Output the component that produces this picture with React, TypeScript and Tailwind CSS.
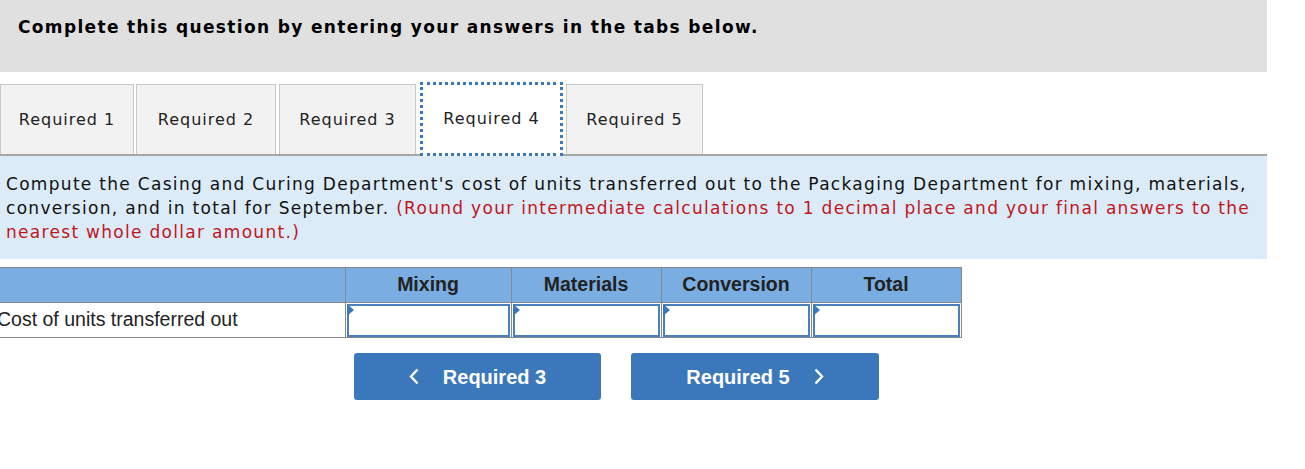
import React from 'react';

const verdana = { fontFamily: 'Verdana, "DejaVu Sans", sans-serif' };
const arial = { fontFamily: '"Liberation Sans", Arial, sans-serif' };

const tabs = ['Required 1', 'Required 2', 'Required 3', 'Required 4', 'Required 5'];
const tabW = ['w-[134px]', 'w-[140px] ml-[2px]', 'w-[137px] ml-[3px]', '', 'w-[137px] ml-[3px]'];
const cols = ['Mixing', 'Materials', 'Conversion', 'Total'];
const colW = ['w-[166px]', 'w-[150px]', 'w-[150px]', 'w-[150px]'];

const AnswerCell: React.FC<{ w: string }> = ({ w }) => (
  <td className={`${w} p-0 border border-[#888] h-[35px]`}>
    <div className="relative h-[33px] mx-px border-2 border-[#4a7fc0] bg-white">
      <span className="absolute -left-[2px] -top-[2px] w-0 h-0 border-t-[6px] border-b-[6px] border-l-[7px] border-t-transparent border-b-transparent border-l-[#3a77bb]" />
    </div>
  </td>
);

const App: React.FC = () => {
  return (
    <div className="w-[1305px] h-[469px] bg-white overflow-hidden">
      <div className="w-[1267px]">
        <div className="h-[72px] bg-[#e0e0e0] pl-[18px] pt-[15px]">
          <h1 className="text-[17px] font-bold text-black tracking-[1.35px]" style={verdana}>
            Complete this question by entering your answers in the tabs below.
          </h1>
        </div>

        <div className="mt-[12px] flex items-end border-b-2 border-[#a6a6a6] h-[72px]" style={verdana}>
          {tabs.map((t, i) =>
            i === 3 ? (
              <div
                key={t}
                className="h-[74px] -mb-[2px] ml-[4px] w-[143px] flex items-center justify-center bg-white border-[3px] border-dotted border-[#3a77bb] text-[16px] tracking-[1px] text-[#222]"
              >
                {t}
              </div>
            ) : (
              <div
                key={t}
                className={`h-[70px] ${tabW[i]} flex items-center justify-center bg-[#f2f2f2] border border-[#c8c8c8] border-b-0 text-[16px] tracking-[1px] text-[#222]`}
              >
                {t}
              </div>
            )
          )}
        </div>

        <div className="h-[103px] bg-[#dbebf8] pl-[6px] pt-[16px] pr-[10px] text-[17px] leading-[24px] tracking-[1.3px] text-[#111]" style={verdana}>
          Compute the Casing and Curing Department's cost of units transferred out to the Packaging Department for mixing, materials, conversion, and in total for September.{' '}
          <span className="text-[#c0161c]">
            (Round your intermediate calculations to 1 decimal place and your final answers to the nearest whole dollar amount.)
          </span>
        </div>
      </div>

      <table className="mt-[8px] -ml-[3px] border-collapse text-[19.5px]" style={arial}>
        <thead>
          <tr className="bg-[#7aaee3] h-[35px]">
            <th className="w-[348px] border-t border-b border-[#888]" />
            {cols.map((c, i) => (
              <th key={c} className={`${colW[i]} border border-[#888] font-bold text-[#222] text-center`}>
                {c}
              </th>
            ))}
          </tr>
        </thead>
        <tbody>
          <tr>
            <td className="border-b border-[#888] text-[#222] text-left pl-0 whitespace-nowrap">Cost of units transferred out</td>
            {colW.map((w, i) => (
              <AnswerCell key={i} w={w} />
            ))}
          </tr>
        </tbody>
      </table>

      <div className="mt-[15px] ml-[354px] flex gap-[30px]" style={arial}>
        <button className="w-[247px] h-[47px] rounded-[3px] bg-[#3a77bb] text-white font-bold text-[20px] flex items-center justify-center">
          <svg width="10" height="17" viewBox="0 0 10 17" className="mr-[24px]">
            <path d="M8.5 1.5 L2 8.5 L8.5 15.5" stroke="white" strokeWidth="2.4" fill="none" />
          </svg>
          Required 3
        </button>
        <button className="w-[248px] h-[47px] rounded-[3px] bg-[#3a77bb] text-white font-bold text-[20px] flex items-center justify-center">
          Required 5
          <svg width="10" height="17" viewBox="0 0 10 17" className="ml-[24px]">
            <path d="M1.5 1.5 L8 8.5 L1.5 15.5" stroke="white" strokeWidth="2.4" fill="none" />
          </svg>
        </button>
      </div>
    </div>
  );
};

export default App;
